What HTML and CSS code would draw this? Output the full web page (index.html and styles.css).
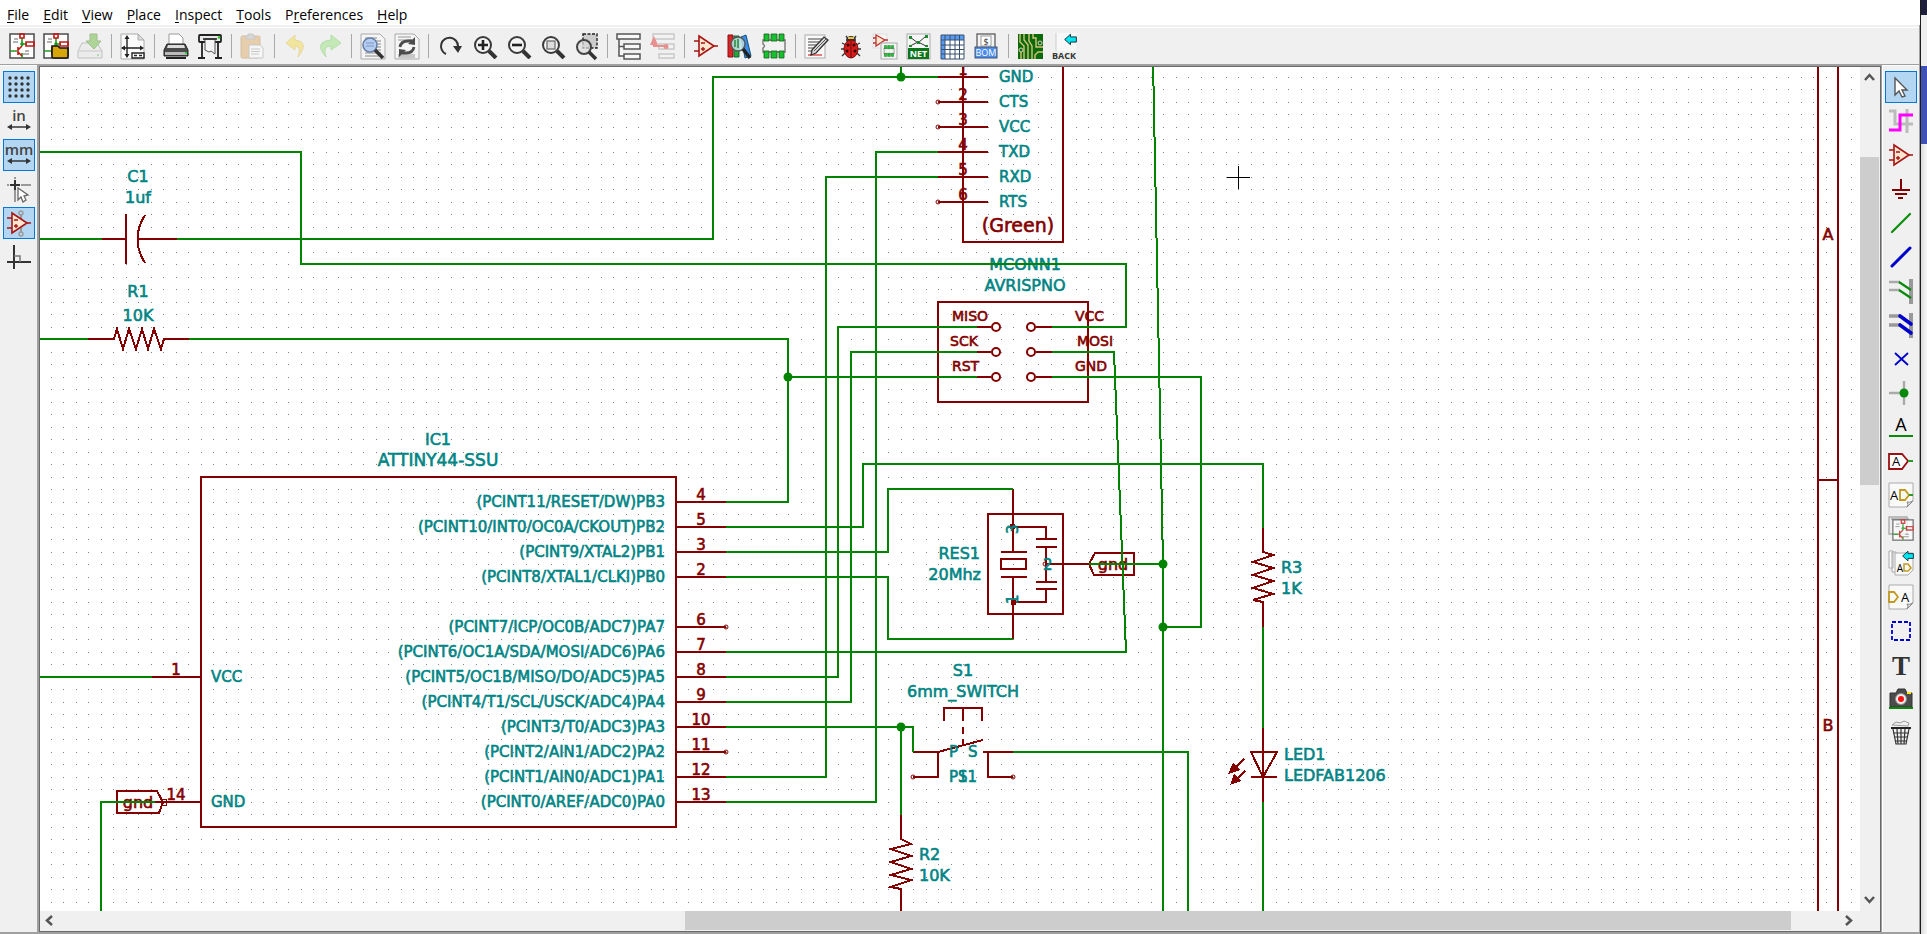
FILE: index.html
```
<!DOCTYPE html>
<html lang="en">
<head>
<meta charset="utf-8">
<title>Schematic Editor</title>
<link rel="stylesheet" href="styles.css">
</head>
<body>
<svg class="defs" aria-hidden="true">
  <defs>
    <symbol id="opamp" viewBox="0 0 26 26">
      <path d="M6 3L21 13L6 23Z" fill="#fbe6cf" stroke="#a81515" stroke-width="1.6"/>
      <path d="M1 8H6M1 18H6M21 13H25M8 10H12M8 16H12M10 14V18" stroke="#a81515" stroke-width="1.4" fill="none"/>
    </symbol>
    <symbol id="lens" viewBox="0 0 26 26">
      <circle cx="11" cy="12" r="8" fill="#f4f4f4" stroke="#3a3a3a" stroke-width="2"/>
      <path d="M17 18L24 25" stroke="#333" stroke-width="4"/>
    </symbol>
    <symbol id="sheet" viewBox="0 0 26 26">
      <rect x="1" y="1" width="24" height="24" fill="#fff" stroke="#555" stroke-width="1.6"/>
      <path d="M4 9H9M5 6H9M14 21H20M16 18H20" stroke="#666" stroke-width="1"/>
      <path d="M1 18H8M13 5V13M13 11H18M13 20V25" stroke="#1f9a1f" stroke-width="1.6"/>
      <path d="M11 1H15V5H11ZM17 9H25V13H17ZM9 14V22M9 17L13 13M9 19L13 23" stroke="#c01818" stroke-width="1.6" fill="none"/>
      <circle cx="13" cy="11" r="1.8" fill="#1f9a1f"/>
    </symbol>
    <symbol id="page" viewBox="0 0 26 26">
      <path d="M1 1H25V19L19 25H1Z" fill="#fafafa" stroke="#aaa"/>
      <path d="M25 19Q21 21 19 20Q21 22 19 25Z" fill="#ddd" stroke="#888"/>
    </symbol>
    <symbol id="chip" viewBox="0 0 26 26">
      <path d="M2 7H24V19H2V15Q5 13 2 11Z" fill="#f2f2f2" stroke="#777" stroke-width="1.4"/>
      <path d="M3 1H8V8H3ZM10 1H16V8H10ZM18 1H23V8H18ZM3 18H8V25H3ZM10 18H16V25H10ZM18 18H23V25H18Z" fill="#17c030" stroke="#1a5a1a" stroke-width=".8"/>
    </symbol>
    <symbol id="back" viewBox="0 0 20 18">
      <path d="M1 9L10 1V5H19V13H10V17Z" fill="#00e5ee" stroke="#123" stroke-width="1.4"/>
    </symbol>
    <pattern id="dots" x="51" y="77" width="25" height="25" patternUnits="userSpaceOnUse">
      <path d="M0 0h1v1h-1zM12 0h1v1h-1zM0 12h1v1h-1zM12 12h1v1h-1z" fill="#848484"/>
    </pattern>
  </defs>
</svg>

<div class="desktop">
<main class="app">
  <nav class="menubar" aria-label="Main menu">
    <button><u>F</u>ile</button><button><u>E</u>dit</button><button><u>V</u>iew</button><button><u>P</u>lace</button><button><u>I</u>nspect</button><button><u>T</u>ools</button><button>P<u>r</u>eferences</button><button><u>H</u>elp</button>
  </nav>

  <div class="toolbar" role="toolbar" aria-label="Main toolbar">
    <button aria-label="New schematic"><svg viewBox="0 0 26 26"><use href="#sheet"/></svg></button>
    <button aria-label="Open schematic"><svg viewBox="0 0 26 26"><use href="#sheet"/><path d="M9 13V24Q9 25 11 25H24Q25 25 25 23V15H17L15 13Z" fill="#d5a50a" stroke="#111" stroke-width="1.6"/></svg></button>
    <button aria-label="Save" class="off"><svg viewBox="0 0 26 26"><path d="M5 10H20L25 18V25H1V18Z" fill="#e6e6e6" stroke="#888"/><path d="M1 18H25" stroke="#999"/><path d="M13 1H20V8H24L17 16L9 8H13Z" fill="#5fb52b" stroke="#438020"/><circle cx="21" cy="22" r="1" fill="#3b3"/></svg></button>
    <i></i>
    <button aria-label="Page settings"><svg viewBox="0 0 26 26"><path d="M1 1H18L24 7V26H1Z" fill="#fcfcfc" stroke="#aaa"/><path d="M18 1V7H24Z" fill="#ddd" stroke="#aaa"/><path d="M7 4V24M2 15H22" stroke="#222" stroke-width="1.4"/><path d="M7 2L9.500 6H4.500ZM7 25L9.500 21H4.500ZM1 15L5 12.500V17.500ZM24 15L20 12.500V17.500Z" fill="#222"/><path d="M12 20H24V25H12ZM14 22.500H17M19 22.500H22" fill="#fff" stroke="#222" stroke-width="1.4"/></svg></button>
    <i></i>
    <button aria-label="Print"><svg viewBox="0 0 26 26"><path d="M6 12V1H16L20 5V12" fill="#fff" stroke="#999"/><path d="M4 11H22L25 17V23H1V17Z" fill="#4a4a4a" stroke="#222"/><path d="M5 12H21L22 15H4Z" fill="#ddd"/><path d="M2 19H24V22H2Z" fill="#bbb"/><path d="M3 25H23" stroke="#222" stroke-width="2"/><circle cx="23" cy="20" r="1" fill="#0c0"/></svg></button>
    <button aria-label="Plot"><svg viewBox="0 0 26 26"><rect x="2" y="2" width="22" height="7" rx="1" fill="#e8e8e8" stroke="#222" stroke-width="1.800"/><path d="M5 9V25M21 9V25M1 25H8M18 25H25" stroke="#222" stroke-width="1.800"/><path d="M8 6H18V21L14 18L12 19L8 17Z" fill="#f5f5f5" stroke="#555"/><path d="M6 6H20" stroke="#222" stroke-width="1.600"/><circle cx="22" cy="4.500" r="1.300" fill="#1c1"/></svg></button>
    <i></i>
    <button aria-label="Paste" class="off"><svg viewBox="0 0 26 26"><rect x="1" y="3" width="19" height="22" rx="1.500" fill="#dba55c" stroke="#b58440"/><path d="M6 6V3H8V1H13V3H15V6Z" fill="#bbb" stroke="#999"/><path d="M9 12H20L23 15V25H9Z" fill="#fff" stroke="#999"/><path d="M11 16H20M11 18.500H20M11 21H19" stroke="#999"/></svg></button>
    <i></i>
    <button aria-label="Undo" class="off"><svg viewBox="0 0 26 26"><path d="M12 2L3 10L12 17V13Q19 13 15 24Q27 9 12 7Z" fill="#f4d93d" stroke="#dcb838"/></svg></button>
    <button aria-label="Redo" class="off"><svg viewBox="0 0 26 26"><path d="M14 2L24 10L14 17V13Q5 13 9 24Q-4 9 14 7Z" fill="#90e070" stroke="#69c858"/></svg></button>
    <i></i>
    <button aria-label="Find"><svg viewBox="0 0 26 26"><path d="M1 1H20L25 6V26H1Z" fill="#f5f5f5" stroke="#aaa"/><path d="M5 5H17M5 8H21M5 11H21M5 14H21M5 17H21M5 20H21M5 23H21" stroke="#888"/><circle cx="10" cy="12" r="7" fill="#b7cdef" stroke="#667fa8" stroke-width="1.600"/><path d="M6 10H14M6 13H14" stroke="#7b95c5"/><path d="M15 17L23 25" stroke="#333" stroke-width="3.600"/></svg></button>
    <button aria-label="Find and replace"><svg viewBox="0 0 26 26"><path d="M1 1H20L25 6V26H1Z" fill="#f5f5f5" stroke="#aaa"/><path d="M4 4H17M4 7H21M4 22H21M4 24H21" stroke="#999"/><path d="M6 14Q7 8 14 8H18M20 14Q19 20 12 20H8" fill="none" stroke="#4c4c4c" stroke-width="2.800"/><path d="M21 4V12L14 11ZM5 24V16L12 17Z" fill="#4c4c4c"/></svg></button>
    <i></i>
    <button aria-label="Refresh"><svg viewBox="0 0 26 26"><path d="M9 21A8.500 8.500 0 1 1 21 13" fill="none" stroke="#333" stroke-width="2"/><path d="M16 13H25L21 20Z" fill="#333"/></svg></button>
    <button aria-label="Zoom in"><svg viewBox="-1 0 26 26"><use href="#lens" width="26" height="26"/><path d="M6 12H16M11 7V17" stroke="#222" stroke-width="2.600"/></svg></button>
    <button aria-label="Zoom out"><svg viewBox="-1 0 26 26"><use href="#lens" width="26" height="26"/><path d="M6 12H16" stroke="#222" stroke-width="2.600"/></svg></button>
    <button aria-label="Zoom to fit"><svg viewBox="-1 0 26 26"><use href="#lens" width="26" height="26"/><rect x="7" y="8" width="8" height="8" fill="#ddd" stroke="#777" stroke-width="1.400"/></svg></button>
    <button aria-label="Zoom to selection"><svg viewBox="-2 0 26 26"><rect x="8" y="1" width="14" height="14" fill="#ccc" stroke="#222" stroke-width="1.400" stroke-dasharray="3 1.500"/><circle cx="9" cy="14" r="7" fill="#ddd" fill-opacity=".7" stroke="#444" stroke-width="2"/><path d="M14 19L21 26" stroke="#333" stroke-width="3.600"/></svg></button>
    <i></i>
    <button aria-label="Hierarchy navigator"><svg viewBox="0 0 26 26"><path d="M1 1H24V6H1ZM8 11H24V16H8ZM8 21H24V26H8ZM3 6V23H8M3 13.500H8" fill="#f8f8f8" stroke="#555" stroke-width="1.500"/></svg></button>
    <button aria-label="Leave sheet" class="off"><svg viewBox="0 0 26 26"><path d="M3 1H24V6H3ZM9 11H24V16H9ZM9 21H24V25H9Z" fill="#f8f8f8" stroke="#999" stroke-width="1.500"/><path d="M4 11V13H15" fill="none" stroke="#e01b1b" stroke-width="2"/><path d="M4 3L0 12H8Z" fill="#e01b1b"/><circle cx="16" cy="13.500" r="2.500" fill="#e01b1b"/></svg></button>
    <i></i>
    <button aria-label="Symbol editor"><svg viewBox="0 0 26 26"><use href="#opamp"/></svg></button>
    <button aria-label="Symbol library browser"><svg viewBox="0 0 26 26"><path d="M1 2H6V24H1Z" fill="#d92525" stroke="#811"/><path d="M7 3H12V24H7Z" fill="#28a636" stroke="#164"/><path d="M14 4L19 2L24 23L18 25Z" fill="#3a8ce8" stroke="#157"/><circle cx="11" cy="11" r="7" fill="#bde0e4" fill-opacity=".85" stroke="#555" stroke-width="1.400"/><path d="M8 7V14M11 6V15" stroke="#4a9a60" stroke-width="2"/><path d="M16 16L23 25" stroke="#222" stroke-width="3.600"/></svg></button>
    <button aria-label="Footprint editor"><svg viewBox="0 0 26 26"><use href="#chip"/></svg></button>
    <i></i>
    <button aria-label="Annotate"><svg viewBox="0 0 26 26"><rect x="1" y="2" width="20" height="23" fill="#fafafa" stroke="#aaa"/><path d="M4 6H18M4 9H18M4 12H14M4 15H12M4 18H9" stroke="#444" stroke-width="1.200"/><path d="M4 22H18" stroke="#d44" stroke-width="1.400"/><path d="M8 17L20 4L24 7L12 20L7 22Z" fill="#d8d8d8" stroke="#333" stroke-width="1.300"/><path d="M10 18L22 6" stroke="#555"/></svg></button>
    <button aria-label="Electrical rules check"><svg viewBox="-1 0 26 26"><path d="M7 3L10 7M17 3L14 7M3 10L7 12M21 10L17 12M2 16H6M22 16H18M3 23L7 19M21 23L17 19" stroke="#333" stroke-width="1.300"/><ellipse cx="12" cy="7" rx="5" ry="4" fill="#333"/><path d="M9 5H15" stroke="#e5c63a" stroke-width="2"/><ellipse cx="12" cy="16" rx="7" ry="9" fill="#d81b1b" stroke="#711"/><path d="M12 8V25" stroke="#611"/><circle cx="9" cy="12" r="1.500" fill="#300"/><circle cx="15" cy="12" r="1.500" fill="#300"/><circle cx="8" cy="18" r="1.500" fill="#300"/><circle cx="16" cy="18" r="1.500" fill="#300"/></svg></button>
    <button aria-label="Assign footprints"><svg viewBox="0 0 26 26"><rect x="1" y="1" width="14" height="14" fill="#f5f5f5" stroke="#ddd"/><path d="M4 2L13 7L4 13ZM1 5H4M1 10H4M13 7H16" fill="#fbe6cf" stroke="#b33" stroke-width="1.300"/><rect x="9" y="10" width="16" height="16" fill="#f5f5f5" stroke="#aaa"/><use href="#chip" x="11" y="12" width="12" height="12"/></svg></button>
    <button aria-label="Generate netlist"><svg viewBox="0 0 26 26"><rect x="1" y="1" width="23" height="25" fill="#f6f6f6" stroke="#aaa"/><path d="M4 4L12 10L20 3M4 13L12 9L20 13" stroke="#333" fill="none"/><path d="M3 3h3v3h-3zM19 2h3v3h-3zM11 8h3v3h-3zM3 12h3v2h-3zM19 12h3v2h-3z" fill="#1b8a2f"/><rect x="2" y="15" width="21" height="11" fill="#0c7519"/><text x="12.500" y="24" class="tiny bold" fill="#fff" text-anchor="middle">NET</text></svg></button>
    <button aria-label="Edit symbol fields"><svg viewBox="0 0 26 26"><rect x="1" y="2" width="23" height="24" fill="#fff"/><path d="M1 2H24V7H1ZM1 2H5V26H1Z" fill="#5a9cf2"/><path d="M1 2H24V26H1ZM1 7H24M1 12H24M1 16.500H24M1 21H24M5 2V26M10 2V26M15 2V26M19.500 2V26" fill="none" stroke="#38506f"/></svg></button>
    <button aria-label="Bill of materials"><svg viewBox="0 0 26 26"><rect x="3" y="1" width="18" height="15" fill="#f4f4f4" stroke="#666" stroke-width="1.400"/><rect x="7" y="3" width="10" height="10" fill="#fff" stroke="#999"/><text x="12" y="12" class="tiny" fill="#333" text-anchor="middle">$</text><rect x="1" y="14" width="22" height="11" fill="#4c8df0" stroke="#456"/><text x="12" y="23" class="tiny" fill="#fff" text-anchor="middle">BOM</text></svg></button>
    <i></i>
    <button aria-label="Open PCB editor"><svg viewBox="0 0 26 26"><rect x="1" y="1" width="25" height="25" fill="#0a6a0a"/><path d="M3 1V9L7 13V26M7 1V7L11 12V26M12 1V8L15 13V26M4 18V26M26 19H21L18 22V26M26 14H19V5H16V1" fill="none" stroke="#d6c27a" stroke-width="1.400"/><circle cx="23" cy="10" r="2" fill="#063" stroke="#e5d9a0"/><circle cx="4" cy="17" r="2" fill="#063" stroke="#e5d9a0"/></svg></button>
    <button aria-label="Back"><svg viewBox="0 0 26 26"><path d="M5 0H25V18H5Z" fill="#f8f8f8"/><path d="M5 18V0" stroke="#ccc"/><use href="#back" x="13" y="0" width="13" height="13"/><text x="13" y="26" class="tiny bold" fill="#333" text-anchor="middle">BACK</text></svg></button>
  </div>

  <div class="workspace">
    <div class="side left" role="toolbar" aria-label="Options">
      <button class="on" aria-label="Show grid"><svg viewBox="0 0 26 26"><path d="M4 4H24M4 10H24M4 16H24M4 22H24" stroke="#333" stroke-width="3.400" stroke-dasharray="0 6" stroke-linecap="round"/></svg></button>
      <button aria-label="Inches"><svg viewBox="0 0 26 26"><text x="13" y="13" class="unit" text-anchor="middle">in</text><path d="M4 19H22" stroke="#333" stroke-width="1.500"/><path d="M1 19L6 16V22ZM25 19L20 16V22Z" fill="#333"/></svg></button>
      <button class="on" aria-label="Millimetres"><svg viewBox="0 0 26 26"><text x="13" y="13" class="unit" text-anchor="middle">mm</text><path d="M4 19H22" stroke="#333" stroke-width="1.500"/><path d="M1 19L6 16V22ZM25 19L20 16V22Z" fill="#333"/></svg></button>
      <button aria-label="Cursor shape"><svg viewBox="0 0 26 26"><path d="M9 1V3M9 14V26M1 9H3M15 9H25" stroke="#999" stroke-width="2"/><path d="M9 4V14M4 9H14" stroke="#333" stroke-width="2"/><path d="M12 12V24L15 21L17 26L20 24L18 20L22 19Z" fill="#fff" stroke="#666" stroke-width="1.300"/></svg></button>
      <button class="on" aria-label="Show hidden pins"><svg viewBox="0 0 26 26"><path d="M15 4V22" stroke="#999" stroke-width="2"/><circle cx="15" cy="3" r="2" fill="none" stroke="#999" stroke-width="1.400"/><circle cx="15" cy="24" r="2" fill="none" stroke="#999" stroke-width="1.400"/><use href="#opamp"/></svg></button>
      <button aria-label="Orthogonal wires"><svg viewBox="0 0 26 26"><path d="M8 1V25M1 18H25" stroke="#333" stroke-width="2"/><path d="M8 12H14V18" fill="none" stroke="#777" stroke-width="1.500"/></svg></button>
    </div>

    <section class="editor">
      <svg class="sheet" role="img" aria-label="Schematic sheet">
        <g transform="translate(-40 -67)">
          <rect x="40" y="67" width="100%" height="100%" fill="url(#dots)"/>

          <g class="sym">
            <path d="M102 239H126M126 214V264M145 215Q130 239 145 263M137 239H177"/>
            <path d="M88 339H114L117 329L123 349L129 329L136 349L142 329L148 349L154 329L161 349L164 339H189"/>
            <path d="M201 477H676V827H201ZM152 677H201M155 802H201"/>
            <path d="M676 502H726M676 527H726M676 552H726M676 577H726M676 627H726M676 652H726M676 677H726M676 702H726M676 727H726M676 752H726M676 777H726M676 802H726"/>
            <path d="M963 60V242H1063V60M938 77H988M938 102H988M938 127H988M938 152H988M938 177H988M938 202H988"/>
            <path d="M938 302H1088V402H938ZM977 327H991M977 352H991M977 377H991M1036 327H1052M1036 352H1052M1036 377H1052"/>
            <path d="M988 514H1063V614H988ZM1013 489V552M1001 552H1027M1001 559H1026V569H1001ZM1001 577H1027M1013 577V639M1013 527H1046V539M1036 539H1057M1036 547H1057M1046 547V582M1036 582H1057M1036 589H1057M1046 589V602H1013M1046 564H1089"/>
            <path d="M1089 564L1095 553H1134V575H1094Z"/>
            <path d="M117 791H157L163 802L159 813H117Z"/>
            <path d="M161 799H166V805H161Z" class="thin"/>
            <path d="M913 752H938L983 740M938 752V777H913M983 752H1013M988 752V777H1013M944 721V708H982V721M963 708V721M963 727V734M963 739V745"/>
            <path d="M901 815V839L911 844L891 849L911 856L891 862L911 869L891 875L911 880L891 887L901 889V911"/>
            <path d="M1263 528V552L1273 555L1253 562L1273 568L1253 575L1273 581L1253 588L1273 594L1253 600L1263 602V627"/>
            <path d="M1263 728V802M1251 752H1277L1263 777ZM1251 777H1277"/>
            <path d="M1244 759L1234 769M1245 771L1236 780"/>
            <path class="solid" d="M1228 774L1233 763L1240 770ZM1230 785L1234 774L1241 781ZM1010 524h5v5h-5zM1011 600h5v5h-5z"/>
            <g class="ring">
              <circle cx="996" cy="327" r="4"/><circle cx="996" cy="352" r="4"/><circle cx="996" cy="377" r="4"/>
              <circle cx="1031" cy="327" r="4"/><circle cx="1031" cy="352" r="4"/><circle cx="1031" cy="377" r="4"/>
            </g>
            <g class="thin ring">
              <circle cx="938" cy="102" r="2"/><circle cx="938" cy="127" r="2"/><circle cx="938" cy="202" r="2"/>
              <circle cx="726" cy="627" r="2"/><circle cx="726" cy="752" r="2"/><circle cx="913" cy="777" r="2"/><circle cx="1013" cy="777" r="2"/><circle cx="1045" cy="564" r="2"/>
            </g>
            <path d="M1818 60V934M1838 60V934M1818 480H1838"/>
          </g>

          <g class="names">
            <g class="ref mid">
              <text x="138" y="182">C1</text><text x="138" y="203">1uf</text>
              <text x="138" y="297">R1</text><text x="138" y="321">10K</text>
              <text x="438" y="445">IC1</text><text class="value" x="438" y="466">ATTINY44-SSU</text>
              <text x="1025" y="270">MCONN1</text><text x="1025" y="291">AVRISPNO</text>
              <text x="963" y="676">S1</text><text x="963" y="697">6mm_SWITCH</text>
            </g>
            <g class="ref end"><text x="980" y="559">RES1</text><text x="981" y="580">20Mhz</text></g>
            <g class="ref">
              <text x="1281" y="573">R3</text><text x="1281" y="594">1K</text>
              <text x="1284" y="760">LED1</text><text x="1284" y="781">LEDFAB1206</text>
              <text x="919" y="860">R2</text><text x="919" y="881">10K</text>
            </g>
            <g class="pin end">
              <text x="665" y="507">(PCINT11/RESET/DW)PB3</text>
              <text x="665" y="532">(PCINT10/INT0/OC0A/CKOUT)PB2</text>
              <text x="665" y="557">(PCINT9/XTAL2)PB1</text>
              <text x="665" y="582">(PCINT8/XTAL1/CLKI)PB0</text>
              <text x="665" y="632">(PCINT7/ICP/OC0B/ADC7)PA7</text>
              <text x="665" y="657">(PCINT6/OC1A/SDA/MOSI/ADC6)PA6</text>
              <text x="665" y="682">(PCINT5/OC1B/MISO/DO/ADC5)PA5</text>
              <text x="665" y="707">(PCINT4/T1/SCL/USCK/ADC4)PA4</text>
              <text x="665" y="732">(PCINT3/T0/ADC3)PA3</text>
              <text x="665" y="757">(PCINT2/AIN1/ADC2)PA2</text>
              <text x="665" y="782">(PCINT1/AIN0/ADC1)PA1</text>
              <text x="665" y="807">(PCINT0/AREF/ADC0)PA0</text>
            </g>
            <g class="pin">
              <text x="211" y="682">VCC</text><text x="211" y="807">GND</text>
              <text x="999" y="82">GND</text><text x="999" y="107">CTS</text><text x="999" y="132">VCC</text><text x="999" y="157">TXD</text><text x="999" y="182">RXD</text><text x="999" y="207">RTS</text>
              <text x="949" y="757">P</text><text x="968" y="757">S</text>
              <text x="949" y="782">P1</text><text x="958" y="782">S1</text>
              <text x="1043" y="570">2</text>
              <text transform="translate(1018 534) rotate(-90)">3</text>
              <text transform="translate(1018 604) rotate(-90)">1</text>
            </g>
          </g>

          <g class="marks">
            <g class="pin mid">
              <text x="701" y="500">4</text><text x="701" y="525">5</text><text x="701" y="550">3</text><text x="701" y="575">2</text>
              <text x="701" y="625">6</text><text x="701" y="650">7</text><text x="701" y="675">8</text><text x="701" y="700">9</text>
              <text x="701" y="725">10</text><text x="701" y="750">11</text><text x="701" y="775">12</text><text x="701" y="800">13</text>
              <text x="176" y="675">1</text><text x="176" y="800">14</text>
              <text x="963" y="75">1</text><text x="963" y="100">2</text><text x="963" y="125">3</text><text x="963" y="150">4</text><text x="963" y="175">5</text><text x="963" y="200">6</text>
            </g>
            <g class="pad">
              <text x="952" y="321">MISO</text><text x="950" y="346">SCK</text><text x="952" y="371">RST</text>
              <text x="1075" y="321">VCC</text><text x="1077" y="346">MOSI</text><text x="1075" y="371">GND</text>
            </g>
            <g class="ref mid"><text x="138" y="808">gnd</text><text x="1113" y="570">gnd</text><text x="1828" y="240">A</text><text x="1828" y="731">B</text></g>
            <text class="note mid" x="1018" y="232">(Green)</text>
          </g>

          <g class="wire">
            <path d="M40 152H301V264H1126V327H1052"/>
            <path d="M40 239H102M177 239H713V77H938M901 60V77"/>
            <path d="M40 339H88M189 339H788V502H726M788 377H977"/>
            <path d="M977 327H838V677H726M977 352H851V702H726"/>
            <path d="M1052 352H1114L1126 652H726"/>
            <path d="M1052 377H1201V627H1163"/>
            <path d="M1153 60L1163 564V934M1089 564H1163"/>
            <path d="M726 527H863V464H1263V528M1263 627V728M1263 802V934"/>
            <path d="M726 552H888V489H1013M726 577H888V639H1013"/>
            <path d="M726 802H876V152H938M726 777H826V177H938"/>
            <path d="M726 727H913V752M901 727V815M1013 752H1188V934"/>
            <path d="M40 677H152M101 934V802H155"/>
          </g>
          <g class="joint">
            <circle cx="901" cy="77" r="4.500"/><circle cx="788" cy="377" r="4.500"/><circle cx="1163" cy="564" r="4.500"/><circle cx="1163" cy="627" r="4.500"/><circle cx="901" cy="727" r="4.500"/>
          </g>
          <path class="cross" d="M1227 177.500H1250M1238.500 166V189"/>
        </g>
      </svg>

      <div class="vscroll">
        <button class="arrow" aria-label="Scroll up"><svg viewBox="0 0 20 20"><path d="M5 13L9.500 8L14 13"/></svg></button>
        <span class="v1"></span><span class="v2"></span><span class="v3"></span>
        <button class="arrow" aria-label="Scroll down"><svg viewBox="0 0 20 20"><path d="M5 6L9.500 11L14 6"/></svg></button>
      </div>
      <div class="hscroll">
        <button class="arrow" aria-label="Scroll left"><svg viewBox="0 0 20 20"><path d="M12 5L7 9.500L12 14"/></svg></button>
        <span class="h1"></span><span class="h2"></span><span class="h3"></span>
        <button class="arrow" aria-label="Scroll right"><svg viewBox="0 0 20 20"><path d="M6 5L11 9.500L6 14"/></svg></button>
      </div>
      <div class="corner"></div>
    </section>

    <div class="side right" role="toolbar" aria-label="Drawing tools">
      <button class="on" aria-label="Select"><svg viewBox="0 0 26 26"><path d="M7 4V21L11 17L14 23L17 22L14 16H19Z" fill="#fff" stroke="#555" stroke-width="1.400"/></svg></button>
      <button aria-label="Highlight net"><svg viewBox="0 0 26 26"><path d="M1 3H7V16H25M19 1V25" fill="none" stroke="#bbb" stroke-width="3"/><path d="M1 22H12V7H25" fill="none" stroke="#f0f" stroke-width="3"/></svg></button>
      <button aria-label="Place symbol"><svg viewBox="0 0 26 26"><use href="#opamp"/></svg></button>
      <button aria-label="Place power port"><svg viewBox="0 0 26 26"><path d="M13 3V14M4 14H22M7 18H19M10 22H15" stroke="#840000" stroke-width="2"/></svg></button>
      <button aria-label="Draw wire"><svg viewBox="0 0 26 26"><path d="M4 22L22 4" stroke="#0a8a0a" stroke-width="2.200" stroke-linecap="round"/></svg></button>
      <button aria-label="Draw bus"><svg viewBox="0 0 26 26"><path d="M4 22L22 4" stroke="#00c" stroke-width="3" stroke-linecap="round"/></svg></button>
      <button aria-label="Wire to bus entry"><svg viewBox="0 0 26 26"><path d="M1 4H12M1 12H12" stroke="#aaa" stroke-width="2.400"/><path d="M23 1V26" stroke="#999" stroke-width="4"/><path d="M11 4L23 12M11 12L23 20" stroke="#0a8a0a" stroke-width="2.200"/></svg></button>
      <button aria-label="Bus to bus entry"><svg viewBox="0 0 26 26"><path d="M1 4H12M1 13H12" stroke="#999" stroke-width="3.600"/><path d="M23 1V26" stroke="#999" stroke-width="4"/><path d="M12 4L23 12M12 13L23 21" stroke="#00c" stroke-width="3.600" stroke-linecap="round"/></svg></button>
      <button aria-label="No connect"><svg viewBox="0 0 26 26"><path d="M7 7L20 19M20 7L7 19" stroke="#00c" stroke-width="1.800"/></svg></button>
      <button aria-label="Place junction"><svg viewBox="0 0 26 26"><path d="M1 13H16M16 1V25" stroke="#aaa" stroke-width="2.400"/><circle cx="16" cy="13" r="4.500" fill="#0a8a0a"/></svg></button>
      <button aria-label="Net label"><svg viewBox="0 0 26 26"><text x="13" y="17" class="glyph" text-anchor="middle">A</text><path d="M1 22H25" stroke="#0a8a0a" stroke-width="2"/></svg></button>
      <button aria-label="Global label"><svg viewBox="0 0 26 26"><path d="M1 6H14L20 13L14 21H1Z" fill="#fff" stroke="#911" stroke-width="1.800"/><path d="M20 13H25" stroke="#2a9a2a" stroke-width="2"/><text x="8" y="18" class="mini" text-anchor="middle">A</text></svg></button>
      <button aria-label="Hierarchical label"><svg viewBox="0 0 26 26"><use href="#page"/><text x="6" y="18" class="mini" text-anchor="middle">A</text><path d="M12 8H17L21 13L17 18H12Z" fill="none" stroke="#c49a1c" stroke-width="1.800"/><path d="M21 13H25" stroke="#2a9a2a" stroke-width="2"/></svg></button>
      <button aria-label="Hierarchical sheet"><svg viewBox="0 0 26 26"><path d="M1 1H19V18H1ZM3 3H21" fill="#eee" stroke="#aaa" stroke-width="1.400"/><use href="#sheet" x="4" y="3" width="22" height="22" opacity=".75"/></svg></button>
      <button aria-label="Import sheet pin"><svg viewBox="0 0 26 26"><path d="M1 1H5V18H1ZM4 2H8V22H4Z" fill="#fafafa" stroke="#aaa"/><path d="M7 3H25V20L20 25H7Z" fill="#fafafa" stroke="#aaa"/><text x="12" y="22" class="mini small" text-anchor="middle">A</text><path d="M16 14H20L23 18L20 21H16Z" fill="none" stroke="#c49a1c" stroke-width="1.500"/><use href="#back" x="14" y="0" width="12" height="12"/></svg></button>
      <button aria-label="Sheet pin"><svg viewBox="0 0 26 26"><use href="#page"/><path d="M1 8H6L10 13L6 18H1Z" fill="none" stroke="#c49a1c" stroke-width="1.800"/><text x="17" y="18" class="mini" text-anchor="middle">A</text></svg></button>
      <button aria-label="Graphic lines"><svg viewBox="0 0 26 26"><rect x="4" y="4" width="18" height="18" fill="none" stroke="#00c" stroke-width="1.800" stroke-dasharray="4 2"/></svg></button>
      <button aria-label="Text"><svg viewBox="0 0 26 26"><text x="13" y="23" class="serif" text-anchor="middle">T</text></svg></button>
      <button aria-label="Image"><svg viewBox="0 0 26 26"><path d="M2 7H8L10 3H17L19 7H24V21H2Z" fill="#4c4c4c" stroke="#333"/><path d="M1 22H25" stroke="#0a8a0a" stroke-width="2"/><circle cx="13" cy="13" r="5.500" fill="#eee" stroke="#888"/><circle cx="13" cy="13" r="3" fill="#f11"/><path d="M19 6H23V8H19Z" fill="#fe0"/></svg></button>
      <button aria-label="Delete"><svg viewBox="0 0 26 26"><path d="M4 5L8 2L12 3L16 1L21 3L20 6Z" fill="#eee" stroke="#999"/><path d="M3 8H23" stroke="#222" stroke-width="2"/><path d="M5 9L8 24H18L21 9M5 13H21M6 17H20M7 21H19M9 9L10 24M13 9V24M17 9L16 24" fill="none" stroke="#333" stroke-width="1.200"/></svg></button>
    </div>
  </div>
</main>
<aside class="behind" aria-hidden="true"><span class="night"></span><span class="tab"></span><span class="blue"></span></aside>
</div>
</body>
</html>
```
FILE: styles.css
```
* { box-sizing: border-box; }
html, body { height: 100%; margin: 0; }
body { overflow: hidden; font-family: "Open Sans", "Noto Sans", sans-serif; color: #000; }
button { display: block; margin: 0; padding: 0; border: 0; background: none; font: inherit; color: inherit; }
.defs { position: absolute; width: 0; height: 0; }

.desktop { display: flex; height: 100vh; }
.app { flex: 1; min-width: 0; display: flex; flex-direction: column; background: #f0f0f0; border-right: 1px solid #1c1c1c; }

.menubar { display: flex; gap: 14px; height: 25px; padding: 4px 0 0 7px; align-items: center; background: #fff; font-size: 14px; line-height: 20px; }
.menubar u { text-underline-offset: 2px; }

.toolbar { display: flex; align-items: center; height: 39px; padding: 2px 0 0 5px; border-right: 1px solid #a0a0a0; background: linear-gradient(#f0f0f0 2px, #fff 2px, #fff 3px, #f0f0f0 3px); }
.toolbar button { width: 34px; height: 34px; padding: 4px; }
.toolbar i { width: 1px; height: 24px; margin: 0 4px; background: #a8a8a8; }
.toolbar svg, .side svg { display: block; width: 26px; height: 26px; overflow: visible; }
.off { opacity: .45; }

.workspace { flex: 1; min-height: 0; display: flex; }
.side { display: flex; flex-direction: column; gap: 2px; padding: 6px 2px 0; border-top: 1px solid #a0a0a0; border-bottom: 2px solid #a0a0a0; box-shadow: inset 0 1px #fff; }
.side button { width: 32px; height: 32px; padding: 3px; }
.side .on { padding: 2px; border: 1px solid #0078d7; background: #b3d7f3; }
.left { width: 37px; padding-left: 3px; }
.right { width: 38px; padding-left: 3px; border-right: 1px solid #a0a0a0; box-shadow: inset 1px 1px #fff; }

.editor { flex: 1; min-width: 0; display: grid; grid-template: minmax(0, 1fr) 20px / minmax(0, 1fr) 20px; border: 2px solid #a0a0a0; border-right-width: 1px; box-shadow: inset 0 0 0 1px #696969; padding: 1px; }
.sheet { display: block; width: 100%; height: 100%; background: #fff; overflow: hidden; }
.vscroll, .hscroll, .corner { background: #f0f0f0; }
.vscroll { display: flex; flex-direction: column; }
.hscroll { display: flex; }
.arrow { width: 20px; height: 20px; }
.arrow svg { display: block; width: 20px; height: 20px; }
.arrow path { fill: none; stroke: #555; stroke-width: 2.5; }
.v1 { flex: 70; } .v2 { flex: 327; } .v3 { flex: 406; }
.h1 { flex: 625; } .h2 { flex: 1106; } .h3 { flex: 49; }
.v2, .h2 { background: #cdcdcd; }
.v2 { margin-right: 1px; }
.h2 { margin-bottom: 1px; }

.sym path, .sym circle, .wire path { fill: none; stroke-width: 2; }
.sym { stroke: #840000; shape-rendering: crispEdges; }
.sym .thin, .sym .thin circle { stroke-width: 1; }
.sym .solid { fill: #840000; stroke: none; }
.ring { shape-rendering: geometricPrecision; }
.wire { stroke: #008400; shape-rendering: crispEdges; }
.joint { fill: #008400; }
.cross { stroke: #000; fill: none; shape-rendering: crispEdges; }

.names, .marks { font-family: "DejaVu Sans", sans-serif; stroke-width: .6px; }
.names { fill: #008484; stroke: #008484; }
.marks { fill: #840000; stroke: #840000; }
.ref { font-size: 16px; }
.value { font-size: 17px; }
.pin { font-size: 15px; }
.pad { font-size: 14px; }
.note { font-size: 19px; }
.mid { text-anchor: middle; }
.end { text-anchor: end; }

.tiny { font: 9px "Open Sans", sans-serif; }
.bold { font-weight: 700; }
.unit { font: 600 15px "Open Sans", sans-serif; fill: #444; }
.glyph { font: 18px "Open Sans", sans-serif; }
.mini { font: 13px "Open Sans", sans-serif; }
.small { font-size: 10px; }
.serif { font: 700 27px "Liberation Serif", serif; fill: #333; }

.behind { width: 6px; display: flex; flex-direction: column; background: linear-gradient(90deg, #dcdcdc, #f8f8f8); }
.night { height: 15px; background: #1f1f3b; }
.tab { height: 51px; background: #eee; }
.blue { height: 78px; background: #3f51b5; }
```
